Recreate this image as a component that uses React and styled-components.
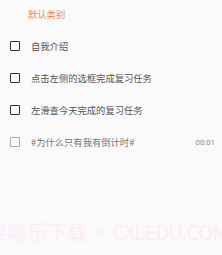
import React from "react";
import styled, { createGlobalStyle } from "styled-components";

const GlobalStyle = createGlobalStyle`
  html, body {
    margin: 0;
    padding: 0;
    background: #fafafa;
  }
  body {
    font-family: "Noto Sans CJK SC", "Noto Sans", sans-serif;
  }
`;

const Page = styled.div`
  position: relative;
  width: 222px;
  height: 255px;
  overflow: hidden;
  background: #fafafa;
`;

const Header = styled.div`
  height: 30px;
  display: flex;
  align-items: center;
  padding-left: 28px;
  box-sizing: border-box;
  padding-bottom: 2px;
  font-size: 9.3px;
  color: #e08a62;
`;

const Row = styled.div`
  height: 32px;
  display: flex;
  align-items: center;
  padding: 0 7px 0 10px;
`;

const Box = styled.span`
  width: 10px;
  height: 10px;
  box-sizing: border-box;
  border: 1.5px solid ${(p) => (p.$dim ? "#a8a8a8" : "#333")};
  border-radius: 1px;
  flex: none;
`;

const Label = styled.span`
  margin-left: 11px;
  flex: 1;
  font-size: 9.3px;
  color: ${(p) => (p.$dim ? "#777" : "#555")};
  white-space: nowrap;
`;

const Time = styled.span`
  font-family: "Roboto", "Noto Sans", sans-serif;
  font-size: 7.8px;
  color: #888;
`;

const Watermark = styled.div`
  position: absolute;
  left: -13px;
  top: 220px;
  font-size: 20px;
  line-height: 24px;
  color: #fdeaf8;
  white-space: nowrap;
  pointer-events: none;
`;

const Dot = styled.span`
  margin: 0 3px 0 2px;
`;

const Site = styled.span`
  letter-spacing: -0.8px;
`;

const tasks = [
  { title: "自我介绍" },
  { title: "点击左侧的选框完成复习任务" },
  { title: "左滑查今天完成的复习任务" },
  { title: "#为什么只有我有倒计时#", dim: true, time: "00:01" },
];

export default function App() {
  return (
    <Page>
      <GlobalStyle />
      <Header>默认类别</Header>
      {tasks.map((t, i) => (
        <Row key={i}>
          <Box $dim={t.dim} />
          <Label $dim={t.dim}>{t.title}</Label>
          {t.time && <Time>{t.time}</Time>}
        </Row>
      ))}
      <Watermark>
        晨曦乐下载<Dot>·</Dot><Site>CXLEDU.COM</Site>
      </Watermark>
    </Page>
  );
}
